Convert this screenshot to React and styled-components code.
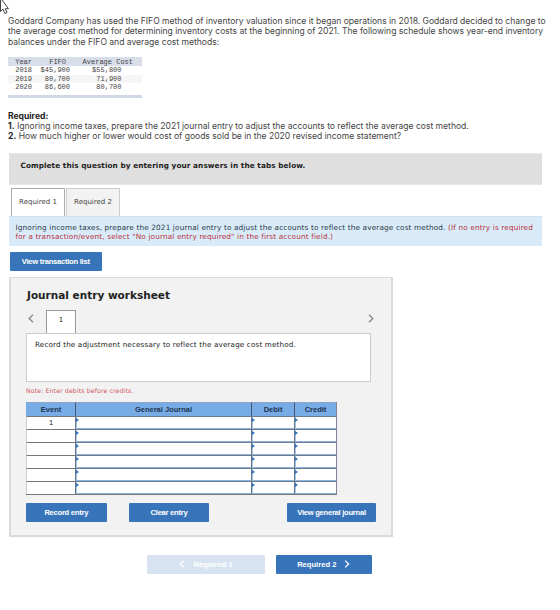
import React from "react";
import styled, { createGlobalStyle } from "styled-components";

const Global = createGlobalStyle`
  * { box-sizing: border-box; }
  body { margin: 0; background: #fff; overflow: hidden; }
  button { font: inherit; }
`;

const verdana = `"DejaVu Sans", Verdana, sans-serif`;
const arial = `"Liberation Sans", Arial, sans-serif`;

const Page = styled.main`
  position: relative;
  width: 560px;
  height: 610px;
  padding: 16px 0 0 8px;
  overflow: hidden;
  color: #333;
  font-family: ${verdana};
`;

const Cursor = styled.svg`
  position: absolute;
  left: 0;
  top: 0;
  width: 10px;
  height: 15px;
`;

const Line = styled.div`
  font-family: ${(p) => p.$font || "Inter, sans-serif"};
  font-size: ${(p) => p.$size || 8.55}px;
  letter-spacing: ${(p) => p.$track || 0}px;
  font-weight: ${(p) => p.$weight || 400};
  line-height: ${(p) => p.$lh || 10.4}px;
  color: ${(p) => p.$color || "#444"};
  white-space: pre;

  b { color: #222; }
`;

const Schedule = styled.table`
  width: 134px;
  margin-top: 10px;
  border-collapse: collapse;
  table-layout: fixed;
  border-bottom: 3px solid #d0d7e5;
  font: 7px/8.2px "Liberation Mono", monospace;
  color: #444;

  th, td { padding: 0; font-weight: 400; white-space: pre; text-align: right; height: 8.4px; }
  thead tr { background: #d9deeb; }
  thead th { height: 9px; }
  tbody tr:nth-child(2) { background: #f6f6f6; }
  tbody tr:last-child td { height: 13px; vertical-align: top; }
`;

const SchedCol = styled.col`
  width: ${(p) => p.$w}px;
`;

const SchedCell = styled.td`
  && { padding-right: ${(p) => p.$right}px; }
`;

const RequiredBlock = styled.section`
  margin-top: 13px;
`;

const Banner = styled.div`
  width: 533px;
  height: 32px;
  margin: 11px 0 0 1px;
  padding: 7px 0 0 11.5px;
  background: #dfdfdf;
  border: 1px solid #e8e8e8;
  border-width: 1px 0;
`;

const Tabs = styled.div`
  display: flex;
  gap: 1px;
  margin: 3px 0 0 3px;
`;

const Tab = styled.div`
  width: 54px;
  height: 28px;
  display: flex;
  align-items: center;
  justify-content: center;
  border: 1px solid ${(p) => (p.$active ? "#aaa" : "#ccc")};
  border-bottom: 0;
  background: ${(p) => (p.$active ? "#fff" : "#f2f2f2")};
`;

const Instruction = styled.div`
  width: 533px;
  height: 30px;
  margin-left: 1px;
  padding: 6px 0 0 6.5px;
  background: #d9ebf9;
  border-top: 1px solid #cfe0ee;
`;

const Red = styled.span`
  color: #b9323b;
`;

const Button = styled.button`
  width: ${(p) => p.$w}px;
  height: 19px;
  padding: 0;
  display: flex;
  align-items: center;
  justify-content: center;
  gap: 8px;
  border: 0;
  border-radius: 1px;
  background: ${(p) => (p.$muted ? "#d8e3f1" : "#3874b9")};
  color: #fff;
  font: 700 7.6px/9px ${arial};
  letter-spacing: ${(p) => p.$track || 0}px;
  white-space: nowrap;
`;

const TransactionBar = styled.div`
  margin: 6px 0 6px 1.5px;
`;

const Worksheet = styled.section`
  width: 384px;
  height: 260px;
  margin-left: 1px;
  padding: 10px 0 0 15px;
  border: 2px solid #dadada;
  border-top-width: 1px;
  background: #f2f2f2;
`;

const Heading = styled.h2`
  margin: 0 0 0 1px;
  color: #222;
  font: 700 10.5px/14px ${verdana};
`;

const Pager = styled.div`
  display: flex;
  width: 348px;
  height: 24px;
  margin-top: 8px;
  align-items: flex-start;
`;

const PageTab = styled.div`
  width: 30px;
  height: 23px;
  margin: 0 auto 0 12px;
  display: flex;
  align-items: center;
  justify-content: center;
  padding-bottom: 3px;
  border: 1px solid #999;
  border-bottom: 0;
  background: #fff;
`;

const ArrowIcon = styled.svg`
  width: ${(p) => p.$w}px;
  height: ${(p) => p.$h}px;
  margin-top: ${(p) => p.$top || 0}px;
  margin-left: ${(p) => p.$left || 0}px;
  flex: none;
`;

const Prompt = styled.div`
  width: 345px;
  height: 49px;
  margin-top: -1px;
  padding: 6px 0 0 8px;
  border: 1px solid #ccc;
  background: #fff;
`;

const Journal = styled.div`
  width: 311px;
  margin-top: 2px;
  border-right: 1px solid #7c8591;
`;

const JournalRow = styled.div`
  display: grid;
  grid-template-columns: 49px 176px 43px 42px;
  height: ${(p) => (p.$head ? 14 : 13)}px;
`;

const HeadCell = styled.div`
  display: flex;
  align-items: center;
  justify-content: center;
  background: #78ace6;
  border-left: 1px solid ${(p) => (p.$first ? "#78ace6" : "#46566c")};
  border-top: 1px solid #8da5c2;
  color: #1d3350;
  font: 700 7.5px/9px ${arial};
`;

const EventCell = styled.div`
  display: flex;
  align-items: center;
  justify-content: center;
  background: #fff;
  border-top: 1px solid #777;
  border-left: 1px solid #ccc;
  font: 7.5px/9px ${arial};
  color: #222;
`;

const EntryCell = styled.div`
  background: #fff;
  border-top: 1px solid #6e7b8b;
  border-left: 1px solid #65758a;
  box-shadow: inset 1px 0 #a9c6e6, inset 0 -1px #8cb3df;
`;

const Marker = styled.svg`
  display: block;
  width: 3px;
  height: 4px;
  margin-top: 1px;
`;

const JournalEnd = styled.div`
  height: 1px;
  background: #777;
`;

const Actions = styled.div`
  display: flex;
  margin-top: 8.4px;
`;

const ActionSlot = styled.div`
  margin-right: ${(p) => p.$gap || 0}px;
`;

const Nav = styled.nav`
  display: flex;
  gap: 11px;
  margin: 18px 0 0 139px;
`;

const schedule = [
  ["2018", "$45,900", "$55,800"],
  ["2019", "80,700", "71,900"],
  ["2020", "86,600", "80,700"],
];

function Arrow({ dir, color, w = 6, h = 9, ...rest }) {
  return (
    <ArrowIcon $w={w} $h={h} viewBox="0 0 6 9" fill="none" {...rest}>
      <path
        d={dir === "left" ? "M5 .7 1.2 4.5 5 8.3" : "M1 .7 4.8 4.5 1 8.3"}
        stroke={color}
        strokeWidth="1.4"
      />
    </ArrowIcon>
  );
}

function Entry() {
  return (
    <EntryCell>
      <Marker viewBox="0 0 3 4"><path d="M0 0 3 2 0 4Z" fill="#2f72bd" /></Marker>
    </EntryCell>
  );
}

export default function App() {
  return (
    <Page>
      <Global />
      <Cursor viewBox="0 0 10 15">
        <path d="M.5 -2V11.5L3 9.2 4.8 13.5 7 12.6 5.3 8.7H8.5Z" fill="#fff" stroke="#444" />
      </Cursor>
      <Line>Goddard Company has used the FIFO method of inventory valuation since it began operations in 2018. Goddard decided to change to</Line>
      <Line>the average cost method for determining inventory costs at the beginning of 2021. The following schedule shows year-end inventory</Line>
      <Line>balances under the FIFO and average cost methods:</Line>

      <Schedule>
        <colgroup><SchedCol $w={25} /><SchedCol $w={38} /><SchedCol $w={71} /></colgroup>
        <thead>
          <tr>
            <SchedCell as="th" $right={1}>Year</SchedCell>
            <SchedCell as="th" $right={5}>FIFO</SchedCell>
            <SchedCell as="th" $right={9}>Average Cost</SchedCell>
          </tr>
        </thead>
        <tbody>
          {schedule.map(([year, fifo, avg]) => (
            <tr key={year}>
              <SchedCell $right={1}>{year}</SchedCell>
              <SchedCell $right={1}>{fifo}</SchedCell>
              <SchedCell $right={20.5}>{avg}</SchedCell>
            </tr>
          ))}
        </tbody>
      </Schedule>

      <RequiredBlock>
        <Line $weight={700} $color="#222">Required:</Line>
        <Line><b>1.</b> Ignoring income taxes, prepare the 2021 journal entry to adjust the accounts to reflect the average cost method.</Line>
        <Line><b>2.</b> How much higher or lower would cost of goods sold be in the 2020 revised income statement?</Line>
      </RequiredBlock>

      <Banner>
        <Line $font={verdana} $size={7.3} $track={0.08} $weight={700} $color="#222">Complete this question by entering your answers in the tabs below.</Line>
      </Banner>
      <Tabs>
        <Tab $active><Line $font={verdana} $size={7}>Required 1</Line></Tab>
        <Tab><Line $font={verdana} $size={7}>Required 2</Line></Tab>
      </Tabs>
      <Instruction>
        <Line $font={verdana} $size={7.3} $track={0.14} $lh={9} $color="#2c3a46">Ignoring income taxes, prepare the 2021 journal entry to adjust the accounts to reflect the average cost method. <Red>(If no entry is required</Red></Line>
        <Line $font={verdana} $size={7.3} $track={0.14} $lh={9}><Red>for a transaction/event, select "No journal entry required" in the first account field.)</Red></Line>
      </Instruction>
      <TransactionBar><Button $w={92.5} $track={-0.26}>View transaction list</Button></TransactionBar>

      <Worksheet>
        <Heading>Journal entry worksheet</Heading>
        <Pager>
          <Arrow dir="left" color="#8a8a8a" $top={4} $left={2} />
          <PageTab><Line $font={verdana} $size={7} $color="#222">1</Line></PageTab>
          <Arrow dir="right" color="#8a8a8a" $top={4} />
        </Pager>
        <Prompt>
          <Line $font={verdana} $size={7.2} $track={0.15} $color="#222">Record the adjustment necessary to reflect the average cost method.</Line>
        </Prompt>
        <Line $font={verdana} $size={6.2} $track={0.13} $lh={18} $color="#d0555b">Note: Enter debits before credits.</Line>
        <Journal>
          <JournalRow $head>
            <HeadCell $first>Event</HeadCell>
            <HeadCell>General Journal</HeadCell>
            <HeadCell>Debit</HeadCell>
            <HeadCell>Credit</HeadCell>
          </JournalRow>
          {["1", "", "", "", "", ""].map((event, i) => (
            <JournalRow key={i}>
              <EventCell>{event}</EventCell>
              <Entry /><Entry /><Entry />
            </JournalRow>
          ))}
          <JournalEnd />
        </Journal>
        <Actions>
          <ActionSlot $gap={22.5}><Button $w={80.5} $track={-0.26}>Record entry</Button></ActionSlot>
          <ActionSlot $gap={78}><Button $w={80} $track={-0.26}>Clear entry</Button></ActionSlot>
          <ActionSlot><Button $w={89} $track={-0.26}>View general journal</Button></ActionSlot>
        </Actions>
      </Worksheet>

      <Nav>
        <Button $w={118} $muted><Arrow dir="left" color="#fff" w={6} h={8} />Required 1</Button>
        <Button $w={95.5}>Required 2<Arrow dir="right" color="#fff" w={6} h={8} /></Button>
      </Nav>
    </Page>
  );
}
